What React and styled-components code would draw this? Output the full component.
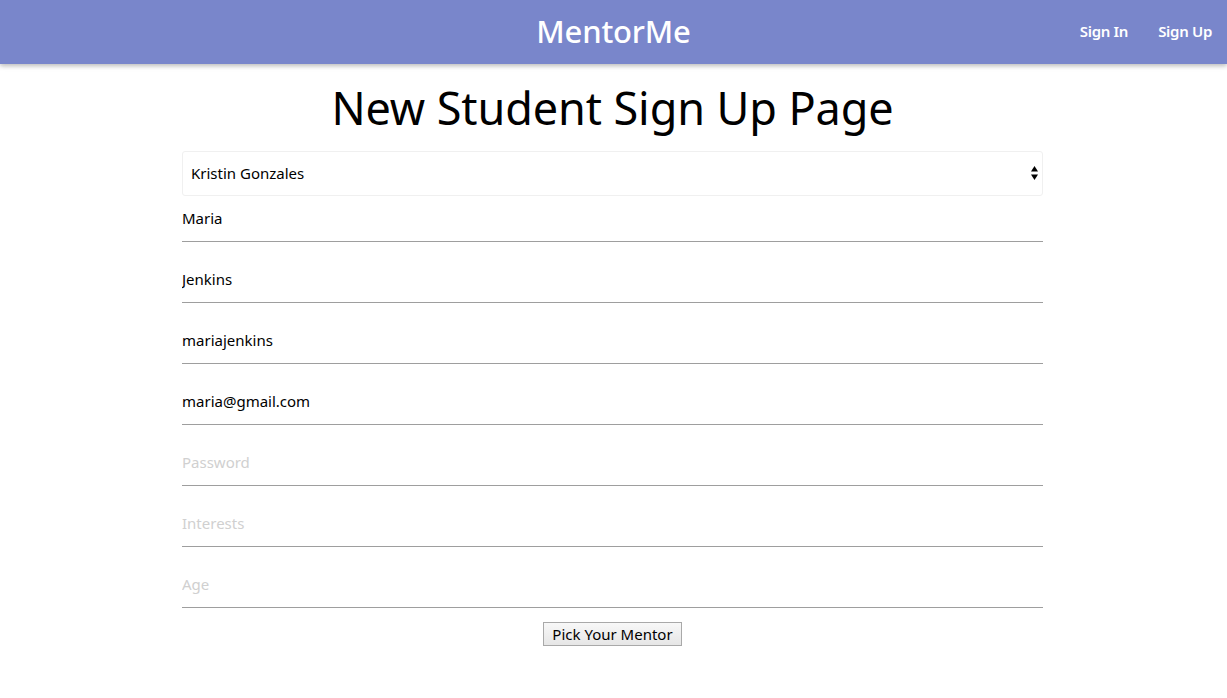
import React from "react";
import styled, { createGlobalStyle } from "styled-components";

const Global = createGlobalStyle`
  html, body { margin: 0; padding: 0; background: #fff; }
  body { font-family: "Noto Sans", "Open Sans", sans-serif; color: #000; }
  * { box-sizing: border-box; }
`;

const Nav = styled.nav`
  height: 64px;
  background: #7986cb;
  box-shadow: 0 2px 4px rgba(0,0,0,0.18), 0 2px 6px rgba(0,0,0,0.1);
  display: flex;
  align-items: center;
  justify-content: center;
  padding-bottom: 3px;
  position: relative;
  color: #fff;
`;

const Brand = styled.a`
  font-size: 31px;
  font-weight: 500;
  color: #fff;
  letter-spacing: -0.2px;
  text-decoration: none;
`;

const NavLinks = styled.ul`
  position: absolute;
  right: 0;
  top: 0;
  height: 64px;
  margin: 0;
  padding: 0 0 2px 0;
  list-style: none;
  display: flex;
  align-items: center;
`;

const NavLink = styled.li`
  padding: 0 15px;
  font-size: 15px;
  font-weight: 600;
  letter-spacing: -0.3px;
`;

const Container = styled.main`
  width: 861px;
  margin: 0 0 0 calc(50% - 431.5px);
  display: flex;
  flex-direction: column;
`;

const Title = styled.h1`
  font-size: 45px;
  font-weight: 400;
  text-align: center;
  margin: 19px 0 18px;
  line-height: 50px;
  letter-spacing: -0.1px;
`;

const Select = styled.select`
  appearance: none;
  height: 45px;
  width: 100%;
  border: 1px solid #f0f0f0;
  border-radius: 3px;
  background: #fff;
  font-family: inherit;
  font-size: 15px;
  padding: 0 8px 2px;
  color: #000;
  outline: none;
`;

const SelectWrap = styled.div`
  position: relative;
`;

const Arrows = styled.span`
  position: absolute;
  right: 5px;
  top: 15px;
  display: flex;
  pointer-events: none;
`;

const Input = styled.input`
  height: 46px;
  width: 100%;
  border: none;
  border-bottom: 1px solid #9e9e9e;
  margin: 0 0 15px;
  padding: 0 0 2px;
  font-family: inherit;
  font-size: 15px;
  color: #000;
  background: transparent;
  outline: none;
  &::placeholder { color: #d0d0d0; }
`;

const Button = styled.button`
  align-self: center;
  margin-top: -1px;
  font-family: inherit;
  font-size: 15px;
  height: 24px;
  padding: 0 8px 1px;
  border: 1px solid #a9a9a9;
  border-radius: 0;
  background: linear-gradient(#f8f8f8, #e6e6e6);
  color: #000;
  line-height: 20px;
`;

export default function App() {
  return (
    <>
      <Global />
      <Nav>
        <Brand>MentorMe</Brand>
        <NavLinks>
          <NavLink>Sign In</NavLink>
          <NavLink>Sign Up</NavLink>
        </NavLinks>
      </Nav>
      <Container>
        <Title>New Student Sign Up Page</Title>
        <SelectWrap>
          <Select defaultValue="kg">
            <option value="kg">Kristin Gonzales</option>
          </Select>
          <Arrows>
            <svg width="7" height="14" viewBox="0 0 7 14">
              <path d="M3.5 0 L7 5.5 H0 Z" fill="#000" />
              <path d="M0 8.5 H7 L3.5 14 Z" fill="#000" />
            </svg>
          </Arrows>
        </SelectWrap>
        <Input defaultValue="Maria" />
        <Input defaultValue="Jenkins" />
        <Input defaultValue="mariajenkins" />
        <Input defaultValue="maria@gmail.com" />
        <Input type="password" placeholder="Password" />
        <Input placeholder="Interests" />
        <Input placeholder="Age" />
        <Button>Pick Your Mentor</Button>
      </Container>
    </>
  );
}
